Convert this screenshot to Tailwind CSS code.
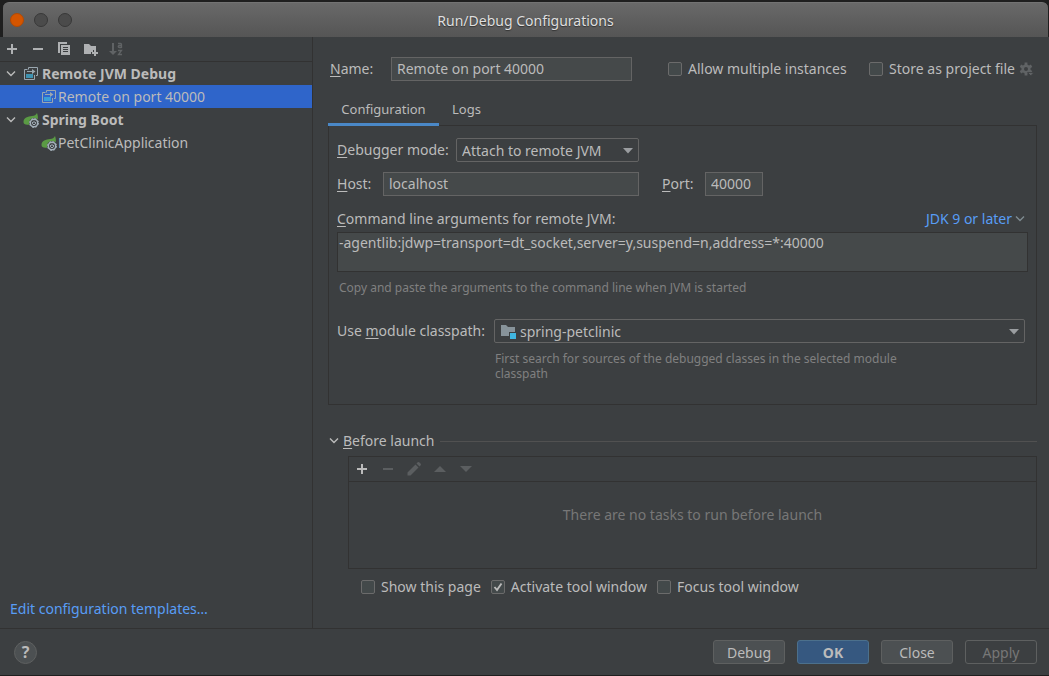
<!DOCTYPE html>
<html lang="en">
<head>
  <meta charset="UTF-8" />
  <meta name="viewport" content="width=device-width, initial-scale=1.0" />
  <title>Run/Debug Configurations</title>
  <script src="https://cdn.jsdelivr.net/npm/@tailwindcss/browser@4"></script>
</head>
<body class="bg-[#1f1f1f] font-['Noto_Sans',sans-serif] text-sm leading-5 text-[#bbbbbb]">

  <!-- Shared icons -->
  <svg class="hidden">
    <symbol id="i-plus" viewBox="0 0 16 16"><path d="M7 3h2v4h4v2H9v4H7V9H3V7h4z" fill="currentColor"/></symbol>
    <symbol id="i-minus" viewBox="0 0 16 16"><path d="M3 7h10v2H3z" fill="currentColor"/></symbol>
    <symbol id="i-chevron" viewBox="0 0 16 16"><path d="M4 5.500l4 4 4-4" fill="none" stroke="currentColor" stroke-width="1.4"/></symbol>
    <symbol id="i-arrow" viewBox="0 0 10 6"><path d="M0 0h10L5 5.500z" fill="currentColor"/></symbol>
    <symbol id="i-remote" viewBox="0 0 16 16">
      <path d="M5.500 3.500v-2h9v8h-1.500" fill="none" stroke="#9aa7b0"/>
      <path d="M4.500 3.500h-3v10h10V9" fill="none" stroke="#9aa7b0"/>
      <path d="M4 5h5V3l3.500 2.500L9 8V6H4z" fill="#9aa7b0"/>
      <path d="M3 8h7v4H3z" fill="#40b6e0" fill-opacity=".7"/>
    </symbol>
    <symbol id="i-spring" viewBox="0 0 16 16">
      <path d="M14 1c1 3 1.200 5 .5 6.500L8 8l-1 4.500C3 13.200.5 12.500.5 10 .5 5.500 5 4.500 9 4c2.500-.3 4-1 5-3z" fill="#5a9a44"/>
      <circle cx="11" cy="11" r="5" fill="#3c3f41"/>
      <circle cx="11" cy="11" r="3.700" fill="none" stroke="#a3b0b9" stroke-width="1.500"/>
      <circle cx="11" cy="11" r="4.500" fill="none" stroke="#a3b0b9" stroke-width="1" stroke-dasharray="1.770 1.770"/>
      <path d="M11 8.800v2.200M9.800 10a1.600 1.600 0 1 0 2.400 0" fill="none" stroke="#a3b0b9"/>
    </symbol>
  </svg>

  <div class="flex flex-col h-screen min-h-[640px] pt-0.5 pb-px">

    <!-- Title bar -->
    <header class="flex items-center h-[35px] shrink-0 ml-[3px] mr-px px-[7px] rounded-t-md bg-linear-to-b from-[#696969] to-[#555555] border-t border-[#737373]">
      <div class="flex flex-1 gap-2.5">
        <button aria-label="Close window" class="size-3.5 rounded-full bg-[#d45500] border border-[#b04a05]"></button>
        <button aria-label="Minimize window" class="size-3.5 rounded-full bg-[#4b4b4b] border border-[#383838]"></button>
        <button aria-label="Maximize window" class="size-3.5 rounded-full bg-[#4b4b4b] border border-[#383838]"></button>
      </div>
      <h1 class="pt-px text-[#dfdfdf] [text-shadow:0_1px_1px_#333333]">Run/Debug Configurations</h1>
      <div class="flex-1"></div>
    </header>

    <div class="flex flex-1 min-h-0 bg-[#3c3f41]">

      <!-- Sidebar -->
      <aside class="flex flex-col w-[313px] shrink-0 border-r border-[#323232]">
        <div class="flex items-center gap-2.5 h-[25px] px-1 border-b border-[#323232] text-[#afb1b3]">
          <button aria-label="Add configuration"><svg class="size-4"><use href="#i-plus"/></svg></button>
          <button aria-label="Remove configuration"><svg class="size-4"><use href="#i-minus"/></svg></button>
          <button aria-label="Copy configuration">
            <svg class="size-4" viewBox="0 0 16 16" fill="currentColor"><path d="M2 1h9v2H4v9H2z"/><path fill-rule="evenodd" d="M5 4h9v10H5zm2 2v1h5V6zm0 2v1h5V8zm0 2v1h5v-1z"/></svg>
          </button>
          <button aria-label="Create folder">
            <svg class="size-4" viewBox="0 0 16 16" fill="currentColor"><path d="M2 3h5l2 2h5v4h-3v2H9v2H2z"/><path d="M12 9h2v2h2v2h-2v2h-2v-2h-2v-2h2z"/></svg>
          </button>
          <button aria-label="Sort configurations" disabled class="text-[#606365]">
            <svg class="size-4" viewBox="0 0 16 16"><path d="M4 2h2v8h3l-4 4-4-4h3z" fill="currentColor"/><path d="M10 2.500h2.500q1 0 1 1V7M13.500 4.500h-2q-1.300 0-1.300 1t1.300 1h2M10 9.500h3.500l-3 4h3.500" fill="none" stroke="currentColor" stroke-width="1.300"/></svg>
          </button>
        </div>

        <ul class="flex-1">
          <li class="flex items-center h-[23px] pl-[3px] font-bold">
            <svg class="size-4 mr-1"><use href="#i-chevron"/></svg>
            <svg class="size-4 mr-[3px]"><use href="#i-remote"/></svg>Remote JVM Debug
          </li>
          <li class="flex items-center h-[23px] pl-[41px] bg-[#2f65ca]">
            <svg class="size-4 mr-px"><use href="#i-remote"/></svg>Remote on port 40000
          </li>
          <li class="flex items-center h-[23px] pl-[3px] font-bold">
            <svg class="size-4 mr-1"><use href="#i-chevron"/></svg>
            <svg class="size-4 mr-[3px]"><use href="#i-spring"/></svg>Spring Boot
          </li>
          <li class="flex items-center h-[23px] pl-[41px]">
            <svg class="size-4 mr-px"><use href="#i-spring"/></svg>PetClinicApplication
          </li>
        </ul>

        <a href="#" class="px-2.5 pb-[9px] text-[#589df6]">Edit configuration templates…</a>
      </aside>

      <!-- Configuration editor -->
      <main class="flex-1 min-w-0 pl-[15px] pr-3 pt-5">
        <div class="flex items-center pl-0.5">
          <label for="name" class="w-[61px]"><span class="underline underline-offset-2">N</span>ame:</label>
          <input id="name" type="text" value="Remote on port 40000" class="w-[241px] h-6 px-[5px] pb-0.5 bg-[#45494a] border border-[#646464]" />
          <label class="flex items-center gap-1.5 ml-9">
            <input type="checkbox" class="appearance-none size-3.5 rounded-xs bg-[#43494a] border border-[#6b6b6b]" />Allow multiple instances
          </label>
          <label class="flex items-center gap-1.5 ml-auto">
            <input type="checkbox" class="appearance-none size-3.5 rounded-xs bg-[#43494a] border border-[#6b6b6b]" />Store as project file
          </label>
          <button aria-label="Storage settings" disabled class="ml-1 mr-0.5 text-[#606365]">
            <svg class="size-4" viewBox="0 0 16 16"><circle cx="7" cy="8" r="3.300" fill="none" stroke="currentColor" stroke-width="2.600"/><path d="M7 1.500v3M7 11.500v3M1.400 4.800L4 6.300M10 9.700l2.600 1.500M1.400 11.200L4 9.700M10 6.300l2.600-1.500" stroke="currentColor" stroke-width="2.800"/><path d="M8.500 11.500H15l-3.200 3.300z" fill="currentColor" stroke="#3c3f41" stroke-width=".8"/></svg>
          </button>
        </div>

        <!-- Tabs -->
        <div role="tablist" class="flex mt-3 text-[13px]">
          <button role="tab" aria-selected="true" class="relative z-10 w-[111px] h-[33px] -mb-px pt-0.5 border-b-3 border-[#4a88c7]">Configuration</button>
          <button role="tab" aria-selected="false" class="h-[33px] -mb-px px-[13px] pt-0.5 border-b-3 border-transparent">Logs</button>
        </div>

        <section class="h-[280px] px-2 pt-3 border border-[#323232]">
          <div class="flex items-center">
            <label for="mode" class="w-[119px]"><span class="underline underline-offset-2">D</span>ebugger mode:</label>
            <div class="relative w-[183px]">
              <select id="mode" class="appearance-none w-full h-6 px-[5px] pt-px rounded-xs border border-[#646464] bg-[#3c3f41]">
                <option>Attach to remote JVM</option>
                <option>Listen to remote JVM</option>
              </select>
              <svg class="absolute right-1.5 top-2.5 w-2.5 h-1.5 pointer-events-none text-[#9a9da0]"><use href="#i-arrow"/></svg>
            </div>
          </div>

          <div class="flex items-center mt-2.5">
            <label for="host" class="w-[46px]"><span class="underline underline-offset-2">H</span>ost:</label>
            <input id="host" type="text" value="localhost" class="w-64 h-6 px-[5px] pb-0.5 bg-[#45494a] border border-[#646464]" />
            <label for="port" class="w-[43px] ml-[23px]"><span class="underline underline-offset-2">P</span>ort:</label>
            <input id="port" type="text" value="40000" class="w-[58px] h-6 px-[5px] pb-0.5 bg-[#45494a] border border-[#646464]" />
          </div>

          <div class="flex items-center justify-between mt-[13px]">
            <label for="args"><span class="underline underline-offset-2">C</span>ommand line arguments for remote JVM:</label>
            <a href="#" class="flex items-center text-[#589df6]">JDK 9 or later<svg class="size-4 text-[#7f8b91]"><use href="#i-chevron"/></svg></a>
          </div>
          <textarea id="args" class="block w-full h-10 mt-[3px] px-px resize-none bg-[#45494a] border border-[#323232]">-agentlib:jdwp=transport=dt_socket,server=y,suspend=n,address=*:40000</textarea>
          <p class="mt-2 pl-0.5 text-xs leading-[15px] text-[#808080]">Copy and paste the arguments to the command line when JVM is started</p>

          <div class="flex mt-6 pr-[3px]">
            <label for="module" class="w-[157px] leading-6">Use <span class="underline underline-offset-2">m</span>odule classpath:</label>
            <div class="flex-1">
              <div class="relative">
                <svg class="absolute left-1.5 top-1 size-4" viewBox="0 0 16 16"><path d="M1 2h5l2 2h7v5H9v4H1z" fill="#87939a"/><path d="M10 10h6v6h-6z" fill="#40b6e0"/></svg>
                <select id="module" class="appearance-none w-full h-6 pl-[25px] pt-px rounded-xs border border-[#646464]">
                  <option>spring-petclinic</option>
                </select>
                <svg class="absolute right-1.5 top-2.5 w-2.5 h-1.5 pointer-events-none text-[#9a9da0]"><use href="#i-arrow"/></svg>
              </div>
              <p class="max-w-[430px] mt-2 pl-px text-xs leading-[15px] text-[#808080]">First search for sources of the debugged classes in the selected module classpath</p>
            </div>
          </div>
        </section>

        <!-- Before launch -->
        <div class="flex items-center mt-[26px]">
          <svg class="size-4 -ml-0.5"><use href="#i-chevron"/></svg>
          <h2 class="ml-px"><span class="underline underline-offset-2">B</span>efore launch</h2>
          <div class="flex-1 h-px ml-1.5 bg-[#515151]"></div>
        </div>
        <div class="h-[113px] mt-[5px] ml-5 border border-[#323232]">
          <div class="flex items-center gap-2.5 h-[25px] px-[5px] border-b border-[#323232] text-[#5b5e60]">
            <button aria-label="Add task" class="text-[#bbbbbb]"><svg class="size-4"><use href="#i-plus"/></svg></button>
            <button aria-label="Remove task" disabled><svg class="size-4"><use href="#i-minus"/></svg></button>
            <button aria-label="Edit task" disabled><svg class="size-4" viewBox="0 0 16 16" fill="currentColor"><path d="M1.500 11.500L9.500 3.500l3 3-8 8h-3zM10.500 2.500l1.200-1.200q.8-.6 1.500 0l1.500 1.500q.6.700 0 1.500l-1.200 1.200z"/></svg></button>
            <button aria-label="Move up" disabled><svg class="size-4" viewBox="0 0 16 16" fill="currentColor"><path d="M2 11h12L8 5z"/></svg></button>
            <button aria-label="Move down" disabled><svg class="size-4" viewBox="0 0 16 16" fill="currentColor"><path d="M2 5h12l-6 6z"/></svg></button>
          </div>
          <p class="pt-[23px] text-center text-[#777777]">There are no tasks to run before launch</p>
        </div>

        <div class="flex gap-2.5 mt-2 ml-[33px]">
          <label class="flex items-center gap-1.5">
            <input type="checkbox" class="appearance-none size-3.5 rounded-xs bg-[#43494a] border border-[#6b6b6b]" />Show this page
          </label>
          <label class="relative flex items-center gap-1.5">
            <input type="checkbox" checked class="appearance-none size-3.5 rounded-xs bg-[#43494a] border border-[#6b6b6b]" />Activate tool window
            <svg class="absolute left-0 top-[3px] size-3.5 pointer-events-none" viewBox="0 0 14 14"><path d="M3.500 7l2.500 3L10.500 3.500" fill="none" stroke="#bbbbbb" stroke-width="1.900"/></svg>
          </label>
          <label class="flex items-center gap-1.5">
            <input type="checkbox" class="appearance-none size-3.5 rounded-xs bg-[#43494a] border border-[#6b6b6b]" />Focus tool window
          </label>
        </div>
      </main>
    </div>

    <!-- Footer -->
    <footer class="flex items-center gap-3 h-[47px] shrink-0 px-3 border-t border-[#323232] bg-[#3c3f41]">
      <button aria-label="Help" class="size-[23px] ml-0.5 mr-auto rounded-full bg-[#4c5052] border border-[#5e6060] text-base leading-5 font-bold">?</button>
      <button class="w-[72px] h-6 pt-px rounded-[3px] bg-[#4c5052] border border-[#5e6060]">Debug</button>
      <button class="w-[72px] h-6 pt-px rounded-[3px] bg-[#365880] border border-[#4c708c] font-bold">OK</button>
      <button class="w-[72px] h-6 pt-px rounded-[3px] bg-[#4c5052] border border-[#5e6060]">Close</button>
      <button disabled class="w-[72px] h-6 pt-px rounded-[3px] border border-[#5e6060] text-[#777777]">Apply</button>
    </footer>
  </div>
</body>
</html>
